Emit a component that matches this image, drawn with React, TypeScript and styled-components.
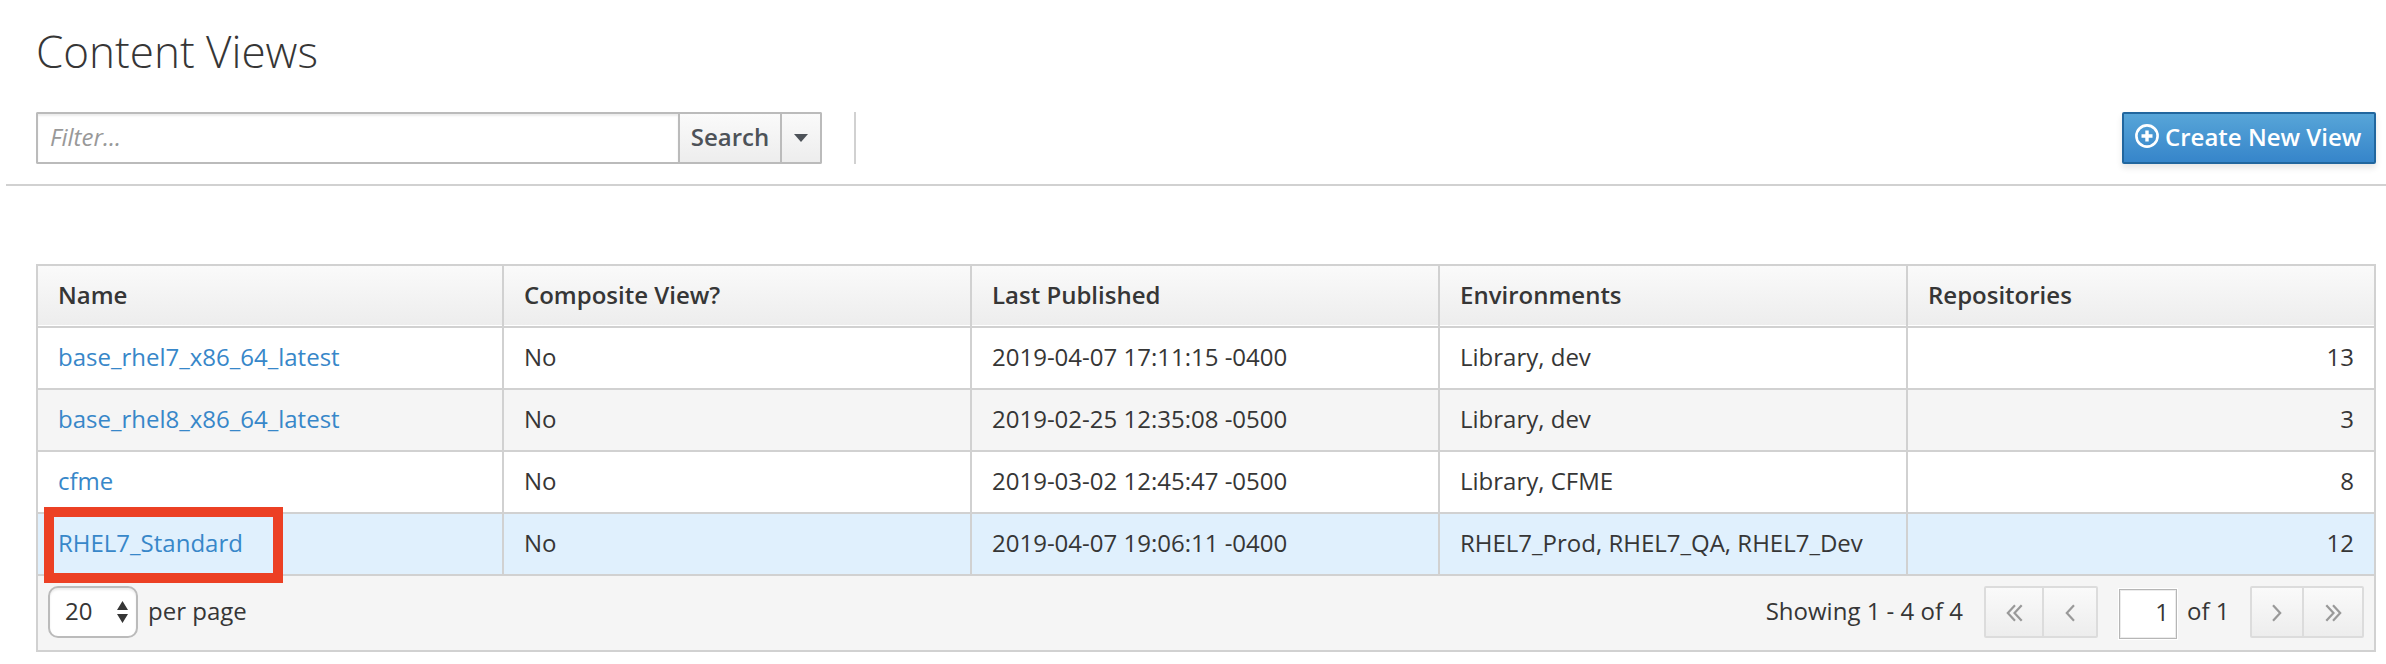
import React from 'react';
import styled, { createGlobalStyle, css } from 'styled-components';

const Global = createGlobalStyle`
  *, *::before, *::after { box-sizing: border-box; }
  body { margin: 0; background: #fff; }
  button, input { font: inherit; margin: 0; }
`;

const Page = styled.main`
  width: 2386px;
  height: 664px;
  overflow: hidden;
  background: #fff;
  color: #363636;
  font-family: 'Open Sans', 'Liberation Sans', sans-serif;
  font-size: 24px;
  line-height: 40px;
`;

const Title = styled.h1`
  margin: 0;
  padding: 27px 0 0 36px;
  height: 112px;
  font-size: 44px;
  font-weight: 300;
  line-height: 48px;
`;

const Toolbar = styled.header`
  display: flex;
  align-items: flex-start;
  height: 74px;
  margin-left: 6px;
  padding: 0 10px 0 30px;
  border-bottom: 2px solid #d1d1d1;
`;

const SearchInput = styled.input`
  width: 642px;
  height: 52px;
  padding: 0 12px 4px;
  border: 2px solid #bbb;
  border-right: 0;
  border-radius: 2px 0 0 2px;
  box-shadow: inset 0 2px 2px rgba(3, 3, 3, 0.075);
  color: #363636;
  outline: 0;
  &::placeholder { color: #999; font-style: italic; opacity: 1; }
`;

const GreyButton = styled.button<{ $width: number; $last?: boolean }>`
  display: flex;
  align-items: center;
  justify-content: center;
  width: ${p => p.$width}px;
  height: 52px;
  padding: 0 0 2px;
  border: 2px solid #bbb;
  border-left-width: ${p => (p.$last ? 0 : 2)}px;
  border-radius: ${p => (p.$last ? '0 2px 2px 0' : '0')};
  background: linear-gradient(#fafafa, #ededed);
  color: #4d5258;
  font-weight: 600;
  svg { margin-top: 2px; }
`;

const Separator = styled.span`
  width: 2px;
  height: 52px;
  margin-left: 32px;
  background: #d1d1d1;
`;

const PrimaryButton = styled.button`
  display: flex;
  align-items: center;
  gap: 6px;
  width: 254px;
  height: 52px;
  margin-left: auto;
  padding: 0 0 2px 11px;
  border: 2px solid #21669e;
  border-radius: 2px;
  background: linear-gradient(#57a5d8, #3685ca);
  box-shadow: 0 4px 6px rgba(3, 3, 3, 0.1);
  color: #fff;
  font-weight: 600;
  white-space: nowrap;
  svg { margin-top: -2px; flex: none; }
`;

const Panel = styled.section`
  width: 2340px;
  margin: 78px 0 0 36px;
  border: 2px solid #d1d1d1;
`;

const Table = styled.div`
  display: flex;
  flex-direction: column;
`;

const Row = styled.div<{ $tone?: 'head' | 'stripe' | 'active' }>`
  display: grid;
  grid-template-columns: 464px repeat(4, 468px);
  height: 62px;
  border-bottom: 2px solid #d1d1d1;
  background: ${p => (p.$tone === 'stripe' ? '#f5f5f5' : p.$tone === 'active' ? '#e0f0fd' : '#fff')};
  ${p => p.$tone === 'head' && css`
    background: linear-gradient(#fafafa, #ededed) 0 0 / 100% 59px no-repeat #fff;
    font-weight: 600;
  `}
`;

const Cell = styled.div<{ $numeric?: boolean }>`
  position: relative;
  padding: 9px 20px 0;
  white-space: nowrap;
  text-align: ${p => (p.$numeric ? 'right' : 'left')};
  & + & { border-left: 2px solid #d1d1d1; }
`;

const Link = styled.a`
  color: #3787c9;
  text-decoration: none;
`;

const Highlight = styled.span`
  position: absolute;
  left: 6px;
  top: -7px;
  width: 239px;
  height: 76px;
  border: 10px solid #ec4024;
  z-index: 1;
`;

const Footer = styled.footer`
  display: flex;
  align-items: flex-start;
  height: 74px;
  padding: 10px 10px 0;
  background: #f5f5f5;
`;

const PageSize = styled.button`
  display: flex;
  align-items: center;
  justify-content: space-between;
  width: 90px;
  height: 52px;
  padding: 0 8px 2px 15px;
  border: 2px solid #bbb;
  border-radius: 10px;
  background: #fff;
  box-shadow: inset 0 2px 2px rgba(3, 3, 3, 0.075);
  color: #363636;
  svg { margin-top: 2px; }
`;

const FooterText = styled.span<{ $left?: number; $push?: boolean; $width?: number }>`
  width: ${p => (p.$width ? `${p.$width}px` : 'auto')};
  margin-top: 5px;
  margin-left: ${p => (p.$push ? 'auto' : `${p.$left ?? 0}px`)};
  white-space: nowrap;
`;

const PagerGroup = styled.div<{ $left: number }>`
  display: flex;
  flex: none;
  width: 114px;
  height: 52px;
  margin-left: ${p => p.$left}px;
  border: 2px solid #dcdcdc;
  border-radius: 2px;
`;

const PagerButton = styled.button<{ $width: number }>`
  display: flex;
  align-items: center;
  justify-content: center;
  width: ${p => p.$width}px;
  padding: 1px 0 0;
  border: 0;
  background: linear-gradient(#fafafa, #ededed);
  color: #999;
  & + & { border-left: 2px solid #dcdcdc; }
`;

const PageInput = styled.input`
  width: 58px;
  height: 50px;
  margin: 3px 0 0 21px;
  padding: 0 7px 6px 0;
  border: 1px solid #b6b6b6;
  background: #fff;
  box-shadow: 0 0 0 1px #fff, inset 0 0 0 1px #ececec;
  color: #363636;
  text-align: right;
  outline: 0;
`;

const Chevron = ({ dir, twice }: { dir: 'left' | 'right'; twice?: boolean }) => {
  const w = twice ? 17 : 10;
  return (
    <svg width={w} height="18" viewBox={`0 0 ${w} 18`} fill="none" stroke="currentColor" strokeWidth="2.2"
      transform={dir === 'right' ? 'scale(-1 1)' : undefined}>
      <path d="M9 1.200 1.800 9 9 16.800" />
      {twice && <path d="M15.700 1.200 8.500 9 15.700 16.800" />}
    </svg>
  );
};

const rows = [
  { name: 'base_rhel7_x86_64_latest', published: '2019-04-07 17:11:15 -0400', env: 'Library, dev', repos: 13 },
  { name: 'base_rhel8_x86_64_latest', published: '2019-02-25 12:35:08 -0500', env: 'Library, dev', repos: 3 },
  { name: 'cfme', published: '2019-03-02 12:45:47 -0500', env: 'Library, CFME', repos: 8 },
  { name: 'RHEL7_Standard', published: '2019-04-07 19:06:11 -0400', env: 'RHEL7_Prod, RHEL7_QA, RHEL7_Dev', repos: 12, active: true },
];

const headings = ['Name', 'Composite View?', 'Last Published', 'Environments', 'Repositories'];

export default function App() {
  return (
    <Page>
      <Global />
      <Title>Content Views</Title>
      <Toolbar>
        <SearchInput placeholder="Filter..." />
        <GreyButton $width={104}>Search</GreyButton>
        <GreyButton $width={40} $last aria-label="Search options">
          <svg width="14" height="8" viewBox="0 0 14 8"><path d="M0 0h14L7 8z" fill="currentColor" /></svg>
        </GreyButton>
        <Separator />
        <PrimaryButton>
          <svg width="24" height="24" viewBox="0 0 24 24" fill="none" stroke="currentColor">
            <circle cx="12" cy="12" r="10.6" strokeWidth="2.6" />
            <path d="M12 6.5v11M6.5 12h11" strokeWidth="3.4" />
          </svg>
          Create New View
        </PrimaryButton>
      </Toolbar>
      <Panel>
        <Table role="table">
          <Row $tone="head">
            {headings.map(h => <Cell key={h}>{h}</Cell>)}
          </Row>
          {rows.map((r, i) => (
            <Row key={r.name} $tone={r.active ? 'active' : i % 2 ? 'stripe' : undefined}>
              <Cell>
                <Link>{r.name}</Link>
                {r.active && <Highlight />}
              </Cell>
              <Cell>No</Cell>
              <Cell>{r.published}</Cell>
              <Cell>{r.env}</Cell>
              <Cell $numeric>{r.repos}</Cell>
            </Row>
          ))}
        </Table>
        <Footer>
          <PageSize>
            20
            <svg width="11" height="22" viewBox="0 0 11 22" fill="currentColor">
              <path d="M5.500 0 11 9H0zM5.500 22 11 13H0z" />
            </svg>
          </PageSize>
          <FooterText $left={10}>per page</FooterText>
          <FooterText $push>Showing 1 - 4 of 4</FooterText>
          <PagerGroup $left={21}>
            <PagerButton $width={56}><Chevron dir="left" twice /></PagerButton>
            <PagerButton $width={54}><Chevron dir="left" /></PagerButton>
          </PagerGroup>
          <PageInput defaultValue="1" />
          <FooterText $left={10} $width={63}>of 1</FooterText>
          <PagerGroup $left={0}>
            <PagerButton $width={50}><Chevron dir="right" /></PagerButton>
            <PagerButton $width={60}><Chevron dir="right" twice /></PagerButton>
          </PagerGroup>
        </Footer>
      </Panel>
    </Page>
  );
}
